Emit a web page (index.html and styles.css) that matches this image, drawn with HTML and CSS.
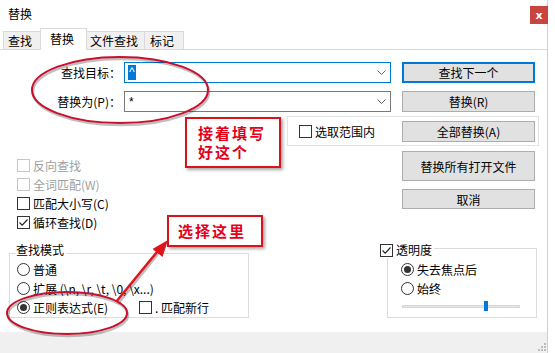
FILE: index.html
```html
<!DOCTYPE html>
<html>
<head>
<meta charset="utf-8">
<link rel="stylesheet" href="styles.css">
</head>
<body>
<div class="dialog">
  <div class="titlebar">
    <span class="title">替换</span>
    <span class="close">x</span>
  </div>

  <div class="tabs">
    <span class="tab t1">查找</span>
    <span class="tab active">替换</span>
    <span class="tab t3">文件查找</span>
    <span class="tab t4">标记</span>
  </div>

  <div class="panel">
    <div class="row">
      <span class="label">查找目标：</span>
      <span class="combo focus"><span class="sel">^</span>
        <svg class="chev" width="9" height="6" viewBox="0 0 9 6"><polyline points="0.5,0.5 4.5,4.5 8.5,0.5" fill="none" stroke="#606060" stroke-width="1"/></svg>
      </span>
      <span class="btn default">查找下一个</span>
    </div>
    <div class="row r2">
      <span class="label">替换为(P)：</span>
      <span class="combo"><span class="val">*</span>
        <svg class="chev" width="9" height="6" viewBox="0 0 9 6"><polyline points="0.5,0.5 4.5,4.5 8.5,0.5" fill="none" stroke="#606060" stroke-width="1"/></svg>
      </span>
      <span class="btn">替换(R)</span>
    </div>

    <div class="scope">
      <span class="check inscope"><span class="box"></span>选取范围内</span>
      <span class="btn">全部替换(A)</span>
    </div>

    <div class="lower">
      <div class="left">
        <div class="check disabled"><span class="box"></span>反向查找</div>
        <div class="check disabled"><span class="box"></span>全词匹配(W)</div>
        <div class="check"><span class="box"></span>匹配大小写(C)</div>
        <div class="check"><span class="box"><svg width="11" height="11" viewBox="0 0 11 11"><polyline points="1.5,5.5 4.2,8.2 9.5,2.5" fill="none" stroke="#222" stroke-width="1.2"/></svg></span>循环查找(D)</div>

        <div class="group mode">
          <div class="gtitle">查找模式</div>
          <div class="opt first"><span class="radio"></span>普通</div>
          <div class="opt"><span class="radio"></span>扩展 (\n, \r, \t, \0, \x...)</div>
          <div class="opt"><span class="radio on"></span><span class="wide">正则表达式(E)</span><span class="box"></span>. 匹配新行</div>
        </div>
      </div>

      <div class="right">
        <span class="btn tall">替换所有打开文件</span>
        <span class="btn cancel">取消</span>

        <div class="group trans">
          <div class="gtitle legend"><span class="box"><svg width="11" height="11" viewBox="0 0 11 11"><polyline points="1.5,5.5 4.2,8.2 9.5,2.5" fill="none" stroke="#222" stroke-width="1.2"/></svg></span>透明度</div>
          <div class="opt first"><span class="radio on"></span>失去焦点后</div>
          <div class="opt"><span class="radio"></span>始终</div>
          <div class="slider"><span class="track"></span><span class="thumb"></span></div>
        </div>
      </div>
    </div>
  </div>

  <div class="footer">
    <svg class="grip" width="10" height="10" viewBox="0 0 10 10">
      <rect x="8" y="2" width="2" height="2" fill="#bdbdbd"/>
      <rect x="5" y="5" width="2" height="2" fill="#bdbdbd"/>
      <rect x="8" y="5" width="2" height="2" fill="#bdbdbd"/>
      <rect x="2" y="8" width="2" height="2" fill="#bdbdbd"/>
      <rect x="5" y="8" width="2" height="2" fill="#bdbdbd"/>
      <rect x="8" y="8" width="2" height="2" fill="#bdbdbd"/>
    </svg>
  </div>

  <!-- annotations drawn over the dialog -->
  <svg class="marks" width="555" height="353" viewBox="0 0 555 353">
    <g fill="none" stroke="rgba(0,0,0,0.25)" stroke-width="2.5">
      <ellipse cx="121" cy="92" rx="88" ry="33"/>
      <ellipse cx="68" cy="315" rx="60" ry="21"/>
      <line x1="118" y1="304" x2="158" y2="254"/>
    </g>
    <g fill="none" stroke="#c8102e" stroke-width="2">
      <ellipse cx="120" cy="90" rx="88" ry="33"/>
      <ellipse cx="67" cy="313" rx="60" ry="21"/>
    </g>
    <line x1="116" y1="302" x2="157" y2="252" stroke="#e0141e" stroke-width="2.5"/>
    <polygon points="168,240 162.5,257 152.5,249" fill="#e0141e"/>
  </svg>
  <div class="note note1">接着填写<br>好这个</div>
  <div class="note note2">选择这里</div>
</div>
</body>
</html>
```

FILE: styles.css
```css
body
{
	margin: 0;
	background-color: #FFFFFF;
	font-family: "Noto Sans CJK SC", "DejaVu Sans", sans-serif;
	font-size: 12px;
	color: #000000;
}

.dialog
{
	position: relative;
	width: 548px;
	height: 353px;
	box-sizing: border-box;
	border-right: 1px solid #CFCFCF;
}

.titlebar
{
	height: 28px;
	display: flex;
	justify-content: space-between;
	align-items: flex-start;
	padding-left: 8px;
}

.title
{
	line-height: 28px;
}

.close
{
	width: 18px;
	height: 18px;
	margin-top: 6px;
	margin-right: -1px;
	background-color: #C9443F;
	color: #FFFFFF;
	font: bold 11px "DejaVu Sans", sans-serif;
	display: flex;
	align-items: center;
	justify-content: center;
}

.tabs
{
	position: relative;
	z-index: 1;
	height: 21px;
	display: flex;
	align-items: flex-end;
	padding-left: 3px;
}

.tab
{
	height: 18px;
	box-sizing: border-box;
	border: 1px solid #D9D9D9;
	border-bottom: none;
	background-color: #F0F0F0;
	line-height: 17px;
	padding-left: 4px;
}

.t1
{
	width: 37px;
	border-right: none;
}

.tab.active
{
	width: 47px;
	height: 22px;
	margin-bottom: -1px;
	background-color: #FFFFFF;
	line-height: 20px;
	padding-left: 9px;
}

.t3
{
	width: 58px;
	border-left: none;
	padding-left: 3px;
}

.t4
{
	width: 39px;
	border-left: none;
	padding-left: 5px;
}

.panel
{
	height: 283px;
	box-sizing: border-box;
	border-top: 1px solid #D9D9D9;
	padding-top: 12px;
}

.row
{
	display: flex;
	align-items: center;
	height: 21px;
}

.r2
{
	margin-top: 8px;
}

.label
{
	width: 121px;
	text-align: right;
}

.combo
{
	width: 267px;
	height: 21px;
	margin-left: 3px;
	box-sizing: border-box;
	border: 1px solid #7A7A7A;
	display: flex;
	align-items: center;
	padding-left: 3px;
	font-family: "Liberation Sans", sans-serif;
}

.combo.focus
{
	border-color: #0078D7;
}

.sel
{
	background-color: #0078D7;
	color: #FFFFFF;
	padding: 0 1px;
	line-height: 15px;
}

.val
{
	padding-left: 1px;
}

.chev
{
	margin-left: auto;
	margin-right: 4px;
}

.btn
{
	width: 133px;
	height: 21px;
	margin-left: 11px;
	box-sizing: border-box;
	border: 1px solid #ADADAD;
	background-color: #E1E1E1;
	display: flex;
	align-items: center;
	justify-content: center;
}

.btn.default
{
	border: 2px solid #0078D7;
}

.scope
{
	width: 252px;
	height: 30px;
	margin: 4px 0 0 287px;
	box-sizing: border-box;
	border: 1px solid #E3E3E3;
	display: flex;
	align-items: center;
	padding: 0 3px 0 11px;
}

.scope .btn
{
	margin-left: 0;
}

.check
{
	display: flex;
	align-items: center;
	height: 19px;
	padding-left: 17px;
}

.check.inscope
{
	flex: 1;
	padding-left: 0;
}

.box
{
	width: 13px;
	height: 13px;
	box-sizing: border-box;
	border: 1px solid #333333;
	background-color: #FFFFFF;
	margin-right: 3px;
	flex: none;
	display: flex;
	align-items: center;
	justify-content: center;
}

.disabled
{
	color: #A0A0A0;
}

.disabled .box
{
	border-color: #C6C6C6;
}

.lower
{
	display: flex;
	margin-top: 5px;
}

.left
{
	width: 380px;
	padding-top: 5px;
}

.group
{
	border: 1px solid #DCDCDC;
}

.gtitle
{
	width: fit-content;
	line-height: 16px;
	background-color: #FFFFFF;
	padding-right: 2px;
	display: flex;
	align-items: center;
}

.mode
{
	width: 238px;
	margin: 21px 0 0 9px;
}

.mode .gtitle
{
	margin: -12px 0 0 6px;
}

.opt
{
	display: flex;
	align-items: center;
	height: 19px;
	padding-left: 7px;
}

.opt.first
{
	margin-top: 2px;
}

.radio
{
	position: relative;
	width: 13px;
	height: 13px;
	box-sizing: border-box;
	border: 1px solid #333333;
	border-radius: 50%;
	margin-right: 3px;
	flex: none;
}

.radio.on::after
{
	content: "";
	position: absolute;
	left: 2px;
	top: 2px;
	width: 7px;
	height: 7px;
	border-radius: 50%;
	background-color: #333333;
}

.wide
{
	width: 106px;
}

.right
{
	width: 155px;
}

.right .btn
{
	margin-left: 22px;
}

.btn.tall
{
	height: 30px;
}

.btn.cancel
{
	height: 20px;
	margin-top: 8px;
}

.trans
{
	width: 148px;
	margin: 39px 0 0 7px;
	padding-bottom: 3px;
}

.trans .gtitle
{
	margin: -7px 0 0 -8px;
}

.trans .opt
{
	padding-left: 13px;
}

.slider
{
	position: relative;
	width: 118px;
	height: 16px;
	margin-left: 14px;
	display: flex;
	align-items: center;
}

.track
{
	width: 100%;
	height: 3px;
	background-color: #E7E7E7;
	border: 1px solid #D6D6D6;
	box-sizing: border-box;
}

.thumb
{
	position: absolute;
	left: 82px;
	top: 3px;
	width: 4px;
	height: 10px;
	background-color: #0078D7;
}

.footer
{
	height: 21px;
	background-color: #F0F0F0;
	display: flex;
	justify-content: flex-end;
	align-items: flex-end;
}

.grip
{
	margin: 0 1px 2px 0;
}

.marks
{
	position: absolute;
	left: 0;
	top: 0;
	pointer-events: none;
}

.note
{
	position: absolute;
	box-sizing: border-box;
	border: 2px solid #D7141A;
	background-color: #FFFFFF;
	color: #E5001B;
	font-weight: bold;
	font-size: 15px;
	letter-spacing: 2px;
	box-shadow: 2px 2px 3px rgba(0, 0, 0, 0.35);
}

.note1
{
	left: 185px;
	top: 117px;
	width: 96px;
	height: 51px;
	padding: 4px 0 0 11px;
	line-height: 19px;
}

.note2
{
	left: 167px;
	top: 215px;
	width: 96px;
	height: 32px;
	padding-left: 9px;
	line-height: 28px;
}
```
